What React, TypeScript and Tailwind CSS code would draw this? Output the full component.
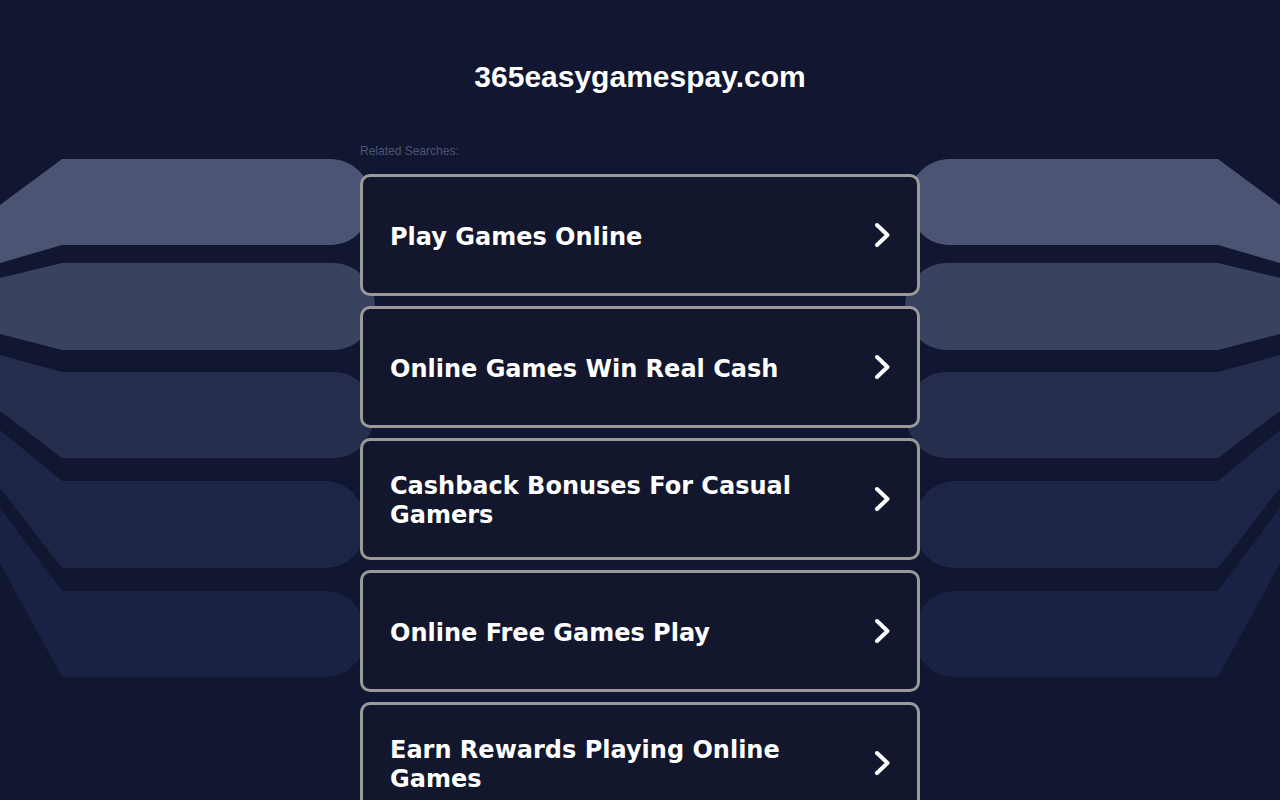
import React from "react";

const items = [
  "Play Games Online",
  "Online Games Win Real Cash",
  "Cashback Bonuses For Casual Gamers",
  "Online Free Games Play",
  "Earn Rewards Playing Online Games",
];

function Shapes() {
  return (
    <g>
      <path d="M0,205 L62,159 H330 C355,159 372,180 372,202 C372,224 355,245 330,245 H62 L0,263 Z" fill="#4b5573" />
      <path d="M0,278 L62,263 H333 C358,263 375,285 375,306 C375,328 358,350 333,350 H62 L0,334 Z" fill="#39425f" />
      <path d="M0,355 L62,372 H333 C358,372 374,393 374,415 C374,437 358,458 333,458 H62 L0,411 Z" fill="#262e4d" />
      <path d="M0,430 L62,481 H325 C350,481 366,503 366,525 C366,547 350,568 325,568 H62 L0,488 Z" fill="#1c2546" />
      <path d="M0,430 L62,481 H325 C350,481 366,503 366,525 C366,547 350,568 325,568 H62 L0,488 Z" fill="url(#dots)" />
      <path d="M0,508 L62,591 H325 C350,591 366,613 366,634 C366,656 350,677 325,677 H62 L0,563 Z" fill="#1a2243" />
      <path d="M0,508 L62,591 H325 C350,591 366,613 366,634 C366,656 350,677 325,677 H62 L0,563 Z" fill="url(#dots)" />
    </g>
  );
}

function Chevron() {
  return (
    <svg width="18" height="28" viewBox="0 0 18 28" className="shrink-0">
      <path d="M4,4 L14.5,14 L4,24" fill="none" stroke="#ffffff" strokeWidth="4" strokeLinecap="round" strokeLinejoin="round" />
    </svg>
  );
}

export default function App() {
  return (
    <div className="relative min-h-[800px] w-full bg-[#111730] overflow-hidden">
      <svg className="absolute left-0 top-0" width="1280" height="800" viewBox="0 0 1280 800">
        <defs>
          <pattern id="dots" width="4" height="4" patternUnits="userSpaceOnUse">
            <rect x="1" y="1" width="1" height="1" fill="#2a3560" opacity="0.4" />
          </pattern>
        </defs>
        <Shapes />
        <g transform="translate(1280,0) scale(-1,1)">
          <Shapes />
        </g>
      </svg>
      <div className="relative mx-auto w-[560px] pt-[60px]">
        <h1 className="text-center text-[30px] leading-[34px] font-bold text-white" style={{ fontFamily: '"Liberation Sans", Arial, sans-serif' }}>
          365easygamespay.com
        </h1>
        <div className="mt-[50px] text-[12px] leading-[14px] text-[#4b5573]" style={{ fontFamily: '"Liberation Sans", Arial, sans-serif' }}>
          Related Searches:
        </div>
        <div className="mt-[16px] flex flex-col gap-[10px]">
          {items.map((t) => (
            <div
              key={t}
              className="flex h-[122px] items-center justify-between rounded-[10px] border-[3px] border-[#9a9a9a] bg-[#12172d] pl-[27px] pr-[26px]"
            >
              <span
                className="max-w-[440px] pt-[4px] text-[24px] leading-[29px] font-bold text-white"
                style={{ fontFamily: '"DejaVu Sans", Verdana, sans-serif' }}
              >
                {t}
              </span>
              <Chevron />
            </div>
          ))}
        </div>
      </div>
    </div>
  );
}
